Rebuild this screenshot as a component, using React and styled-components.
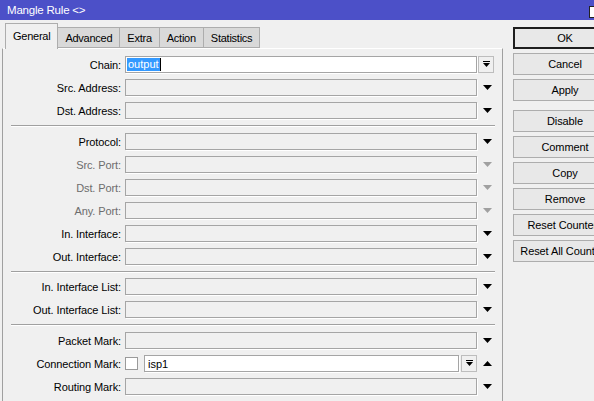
import React from "react";
import styled, { createGlobalStyle } from "styled-components";

const GlobalStyle = createGlobalStyle`
  html, body {
    margin: 0;
    padding: 0;
    height: 401px;
    overflow: hidden;
    background: #f0f0f0;
  }
  body {
    font-family: "Liberation Sans", Arial, sans-serif;
    font-size: 11px;
    color: #000;
  }
`;

const Window = styled.div`
  width: 594px;
  height: 401px;
  display: flex;
  flex-direction: column;
  background: #f0f0f0;
  overflow: hidden;
`;

const TitleBar = styled.div`
  height: 20px;
  flex: none;
  background: #4c50c8;
  display: flex;
  align-items: center;
  justify-content: space-between;
  padding-left: 7px;
`;

const Title = styled.span`
  color: #fff;
  font-size: 11.5px;
  letter-spacing: -0.2px;
`;

const TitleButton = styled.span`
  width: 10px;
  height: 10px;
  margin-right: -7px;
  margin-top: 4px;
  background: #fff;
  border: 1px solid #222;
`;

const Body = styled.div`
  flex: 1;
  display: flex;
  min-height: 0;
`;

const Main = styled.div`
  width: 503px;
  flex: none;
  display: flex;
  flex-direction: column;
`;

const TabStrip = styled.div`
  height: 28px;
  display: flex;
  align-items: flex-end;
  padding-left: 5px;
  flex: none;
`;

const Tab = styled.div`
  box-sizing: border-box;
  display: flex;
  align-items: center;
  padding: 0 7px;
  height: ${(p) => (p.$active ? "26px" : "21px")};
  margin-bottom: ${(p) => (p.$active ? "-1px" : "0")};
  padding-bottom: ${(p) => (p.$active ? "2px" : "0")};
  background: ${(p) => (p.$active ? "#f0f0f0" : "#d9d9d9")};
  border: 1px solid #adadad;
  border-bottom: ${(p) => (p.$active ? "none" : "1px solid #adadad")};
  border-left-width: ${(p) => (p.$first || p.$active ? "1px" : "0")};
  position: relative;
  z-index: ${(p) => (p.$active ? 1 : 0)};
  letter-spacing: -0.25px;
`;

const Panel = styled.div`
  flex: 1;
  margin-left: 2px;
  width: 501px;
  box-sizing: border-box;
  border-top: 1px solid #fff;
  border-left: 1px solid #a0a0a0;
  border-right: 1px solid #a0a0a0;
  padding-top: 4px;
  display: flex;
  flex-direction: column;
`;

const Row = styled.div`
  height: 23px;
  flex: none;
  display: flex;
  align-items: center;
`;

const Label = styled.span`
  width: 118px;
  margin-right: 4px;
  text-align: right;
  white-space: nowrap;
  letter-spacing: -0.1px;
  color: ${(p) => (p.$disabled ? "#6d6d6d" : "#000")};
`;

const Field = styled.div`
  width: 352px;
  height: 17px;
  display: flex;
  align-items: center;
`;

const Input = styled.div`
  flex: 1;
  height: 17px;
  box-sizing: border-box;
  border: 1px solid #a5a5a5;
  box-shadow: 1px 1px 0 #fff;
  background: ${(p) => (p.$white ? "#fff" : "#f0f0f0")};
  display: flex;
  align-items: center;
  padding-left: 1px;
  white-space: nowrap;
  overflow: hidden;
`;

const Selected = styled.span`
  background: #3399ff;
  color: #fff;
  line-height: 13px;
  padding: 0 1px;
`;

const Caret = styled.span`
  width: 1px;
  height: 13px;
  background: #000;
`;

const Value = styled.span`
  padding-left: 2px;
`;

const Check = styled.span`
  width: 13px;
  height: 13px;
  box-sizing: border-box;
  border: 1px solid #9a9a9a;
  background: #fff;
  margin-right: 6px;
  flex: none;
`;

const Control = styled.div`
  width: 18px;
  height: 17px;
  margin-left: 1px;
  display: flex;
  align-items: center;
  justify-content: center;
`;

const DropButton = styled.div`
  width: 16px;
  height: 17px;
  box-sizing: border-box;
  border: 1px solid #bdbdbd;
  background: #f0f0f0;
  display: flex;
  align-items: center;
  justify-content: center;
  flex: none;
  margin-left: ${(p) => p.$gap || 0}px;
  margin-right: ${(p) => p.$trail || 0}px;
`;

/* etched divider between field groups; $tall adds one pixel below the line */
const Separator = styled.div`
  height: ${(p) => (p.$tall ? "8px" : "7px")};
  flex: none;
  margin: 0 7px 0 8px;
  padding-top: 3px;
  box-sizing: border-box;
  &::before {
    content: "";
    display: block;
    height: 1px;
    background: #a0a0a0;
    border-bottom: 1px solid #fff;
  }
`;

const Side = styled.div`
  flex: 1;
  padding: 7px 0 0 10px;
  display: flex;
  flex-direction: column;
  overflow: hidden;
`;

const Button = styled.div`
  width: 104px;
  height: 22px;
  box-sizing: border-box;
  flex: none;
  display: flex;
  align-items: center;
  justify-content: center;
  white-space: nowrap;
  background: #e8e8e8;
  border: ${(p) => (p.$default ? "2px solid #1e1e1e" : "1px solid #adadad")};
  margin-bottom: 4px;
  margin-top: ${(p) => (p.$groupStart ? "5px" : "0")};
  letter-spacing: -0.1px;
`;

const Arrow = ({ up, dim }) => (
  <svg width="9" height="5" viewBox="0 0 9 5">
    <polygon points={up ? "0,5 9,5 4.5,0" : "0,0 9,0 4.5,5"} fill={dim ? "#a0a0a0" : "#000"} />
  </svg>
);

const DropIcon = () => (
  <svg width="7" height="7" viewBox="0 0 7 7">
    <rect x="0" y="0" width="7" height="1" fill="#000" />
    <polygon points="0,2 7,2 3.5,6" fill="#000" />
  </svg>
);

const FormRow = ({ label, disabled }) => (
  <Row>
    <Label $disabled={disabled}>{label}:</Label>
    <Field>
      <Input />
    </Field>
    <Control>
      <Arrow dim={disabled} />
    </Control>
  </Row>
);

const tabs = ["General", "Advanced", "Extra", "Action", "Statistics"];
const buttons = [
  { text: "OK", def: true },
  { text: "Cancel" },
  { text: "Apply" },
  { text: "Disable", group: true },
  { text: "Comment" },
  { text: "Copy" },
  { text: "Remove" },
  { text: "Reset Counters" },
  { text: "Reset All Counters" },
];

export default function App() {
  return (
    <>
      <GlobalStyle />
      <Window>
        <TitleBar>
          <Title>Mangle Rule &lt;&gt;</Title>
          <TitleButton />
        </TitleBar>
        <Body>
          <Main>
            <TabStrip>
              {tabs.map((t, i) => (
                <Tab key={t} $active={i === 0} $first={i === 0}>
                  {t}
                </Tab>
              ))}
            </TabStrip>
            <Panel>
              <Row>
                <Label>Chain:</Label>
                <Field>
                  <Input $white>
                    <Selected>output</Selected>
                    <Caret />
                  </Input>
                </Field>
                <Control>
                  <DropButton $trail={2}>
                    <DropIcon />
                  </DropButton>
                </Control>
              </Row>
              <FormRow label="Src. Address" />
              <FormRow label="Dst. Address" />
              <Separator $tall />
              <FormRow label="Protocol" />
              <FormRow label="Src. Port" disabled />
              <FormRow label="Dst. Port" disabled />
              <FormRow label="Any. Port" disabled />
              <FormRow label="In. Interface" />
              <FormRow label="Out. Interface" />
              <Separator />
              <FormRow label="In. Interface List" />
              <FormRow label="Out. Interface List" />
              <Separator $tall />
              <FormRow label="Packet Mark" />
              <Row>
                <Label>Connection Mark:</Label>
                <Field>
                  <Check />
                  <Input $white>
                    <Value>isp1</Value>
                  </Input>
                  <DropButton $gap={2}>
                    <DropIcon />
                  </DropButton>
                </Field>
                <Control>
                  <Arrow up />
                </Control>
              </Row>
              <FormRow label="Routing Mark" />
            </Panel>
          </Main>
          <Side>
            {buttons.map((b) => (
              <Button key={b.text} $default={b.def} $groupStart={b.group}>
                {b.text}
              </Button>
            ))}
          </Side>
        </Body>
      </Window>
    </>
  );
}
